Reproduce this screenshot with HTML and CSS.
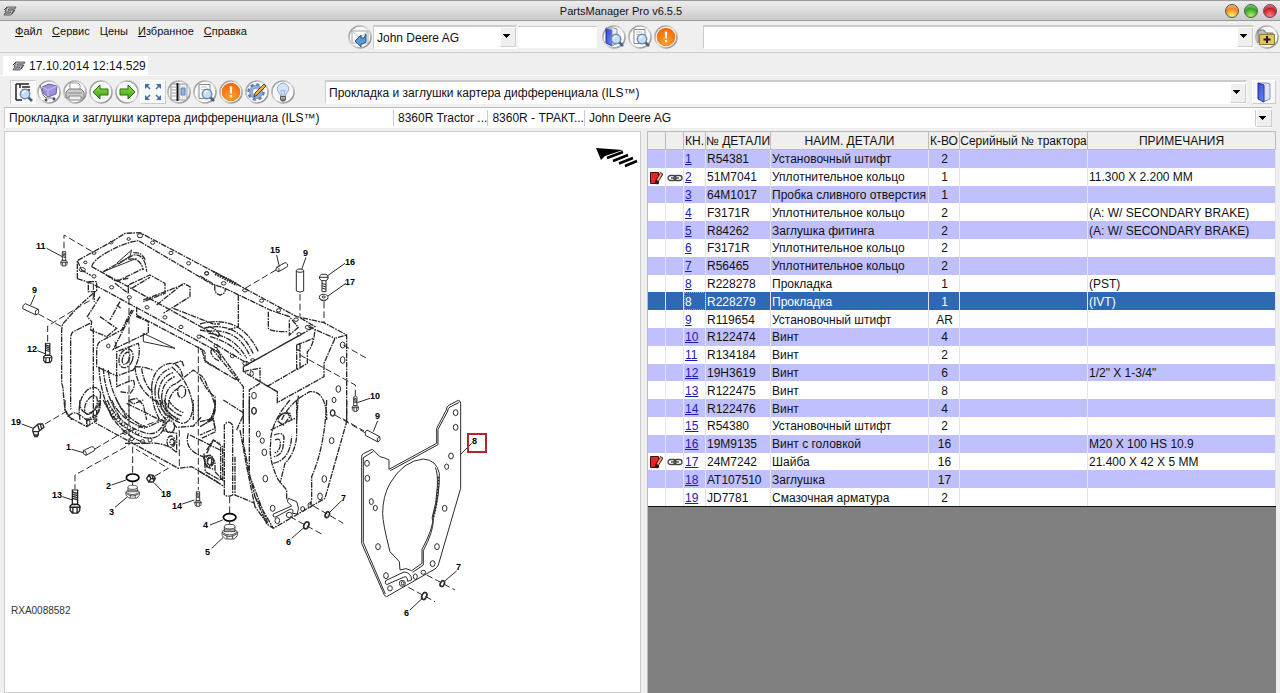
FILE: index.html
```html
<!DOCTYPE html>
<html lang="ru">
<head>
    <meta charset="UTF-8">
    <meta name="viewport" content="width=device-width, initial-scale=1.0">
    <title>PartsManager Pro v6.5.5</title>
    <link rel="stylesheet" href="styles.css">
</head>
<body>
    <!-- shared icons -->
    <svg class="defs" width="0" height="0" aria-hidden="true">
        <defs>
            <linearGradient id="steel" x1="0" y1="0" x2="1" y2="1">
                <stop offset="0" stop-color="#888"/><stop offset=".5" stop-color="#ddd"/><stop offset="1" stop-color="#777"/>
            </linearGradient>
            <radialGradient id="orange" cx=".5" cy=".75" r=".7">
                <stop offset="0" stop-color="#ffa02e"/><stop offset="1" stop-color="#ee6a0a"/>
            </radialGradient>
            <linearGradient id="green" x1="0" y1="0" x2="0" y2="1">
                <stop offset="0" stop-color="#8ee04a"/><stop offset="1" stop-color="#3f9e12"/>
            </linearGradient>
            <linearGradient id="blue" x1="0" y1="0" x2="1" y2="1">
                <stop offset="0" stop-color="#2f45d8"/><stop offset="1" stop-color="#6d8cf5"/>
            </linearGradient>
            <symbol id="ring" viewBox="0 0 24 24">
                <circle cx="12" cy="12" r="11" fill="#f6f6f6" stroke="url(#steel)" stroke-width="1.600"/>
                <circle cx="12" cy="12" r="9.500" fill="none" stroke="#fff"/>
            </symbol>
            <symbol id="lens" viewBox="0 0 24 24">
                <path d="M17 17l4 4" stroke="#4b5f80" stroke-width="2.500"/>
                <circle cx="14" cy="14" r="4.700" fill="#c4def7" stroke="#6d87b0" stroke-width="1.400"/>
                <path d="M11.500 13.500q1-2.500 3-2.300" fill="none" stroke="#fff" stroke-width="1.300"/>
            </symbol>
            <symbol id="logo" viewBox="0 0 14 10">
                <path d="M4 1h9l-1 2H6l-1 1h6l-3 5H1l1-2h5l1-1H2z" fill="#bbb" stroke="#444" stroke-width=".8"/>
                <path d="M1 4l3-3M9 8l3-4" stroke="#444"/>
            </symbol>
            <symbol id="page-find" viewBox="0 0 24 24">
                <use href="#ring"/>
                <path d="M6 4.500h11v14H6z" fill="#fff" stroke="#888"/>
                <path d="M8 7h6M8 9.500h5" stroke="#bbb"/>
                <use href="#lens"/>
            </symbol>
            <symbol id="alert" viewBox="0 0 24 24">
                <use href="#ring"/>
                <circle cx="12" cy="12" r="9.300" fill="url(#orange)"/>
                <path d="M10.700 6.500h2.600l-.5 7h-1.600zM10.900 15h2.200v2.300h-2.200z" fill="#fff"/>
            </symbol>
            <symbol id="arrow" viewBox="0 0 24 24">
                <use href="#ring"/>
                <path d="M4 12l7-7v4h8v6h-8v4z" fill="url(#green)" stroke="#2c6e10" stroke-linejoin="round"/>
            </symbol>
            <symbol id="note" viewBox="0 0 14 14">
                <path d="M1.500 1.500h8v11h-8z" fill="#e8222a" stroke="#3c1212"/>
                <path d="M13 2L8 10l-1 3" fill="none" stroke="#3c1212" stroke-width="3.500"/>
                <path d="M12.500 2.500L8.500 9.500" stroke="#e6b07c" stroke-width="1.800"/>
            </symbol>
            <symbol id="chain" viewBox="0 0 16 8">
                <rect x="1" y="1.500" width="8" height="5" rx="2.500" fill="none" stroke="#444" stroke-width="1.300"/>
                <rect x="7" y="1.500" width="8" height="5" rx="2.500" fill="none" stroke="#444" stroke-width="1.300"/>
                <path d="M4 4h8" stroke="#444" stroke-width="1.300"/>
            </symbol>
            <symbol id="bolt" viewBox="0 0 24 48">
                <path d="M7 1h10v28H7zM3 31l4-3h10l4 3v9l-4 5H7l-4-5zM1 34h22M8 34v10M16 34v10M7 5l10 3M7 9l10 3M7 13l10 3M7 17l10 3" fill="#fff" stroke="#222" stroke-width="2.500"/>
            </symbol>
            <symbol id="plug" viewBox="0 0 50 50">
                <path d="M9 9v15h32V9M2 24l8-5h30l8 5v12l-9 10H13L2 36z" fill="#fff" stroke="#222" stroke-width="2.500"/>
                <ellipse cx="25" cy="9" rx="16" ry="7" fill="#fff" stroke="#222" stroke-width="2.500"/>
                <path d="M2 26q23 16 46 0M4 31q21 15 42 0M17 36v9M34 36v9" fill="none" stroke="#222" stroke-width="2.500"/>
            </symbol>
        </defs>
    </svg>

    <header class="titlebar">
        <svg class="logo" viewBox="0 0 14 10"><use href="#logo"/></svg>
        <h1>PartsManager Pro v6.5.5</h1>
        <div class="window-buttons">
            <button class="orb orb-yellow" aria-label="Свернуть"></button>
            <button class="orb orb-green" aria-label="Развернуть"></button>
            <button class="orb orb-red" aria-label="Закрыть"></button>
        </div>
    </header>

    <div class="menubar">
        <nav class="menu">
            <a href="#"><u>Ф</u>айл</a>
            <a href="#"><u>С</u>ервис</a>
            <a href="#">Цены</a>
            <a href="#"><u>И</u>збранное</a>
            <a href="#"><u>С</u>правка</a>
        </nav>
        <div class="search">
            <button class="tool" aria-label="Открыть">
                <svg viewBox="0 0 24 24"><use href="#ring"/><path d="M4 6h16v12H4z" fill="#fafafa" stroke="#aaa"/><path d="M4 6l8 7 8-7" fill="none" stroke="#bbb"/><path d="M7 16l6-6v3h3l2-4v8l-3 2h-2v3z" fill="#5f97cf" stroke="#27558d"/></svg>
            </button>
            <div class="combo combo-brand">
                <select aria-label="Каталог"><option>John Deere AG</option></select>
            </div>
            <input class="search-text" type="text" aria-label="Поиск">
            <button class="tool" aria-label="Поиск в каталоге">
                <svg viewBox="0 0 24 24"><use href="#ring"/><path d="M4 3l6 2v16l-6-3z" fill="url(#blue)" stroke="#24309a"/><path d="M4 3h8l3 1v14l-5 3V5z" fill="#eee" stroke="#8893b5"/><use href="#lens"/></svg>
            </button>
            <button class="tool" aria-label="Поиск на странице"><svg viewBox="0 0 24 24"><use href="#page-find"/></svg></button>
            <button class="tool" aria-label="Внимание"><svg viewBox="0 0 24 24"><use href="#alert"/></svg></button>
        </div>
        <div class="combo combo-favorites">
            <select aria-label="Избранное"><option></option></select>
        </div>
        <button class="tool" aria-label="Добавить в избранное">
            <svg viewBox="0 0 24 24"><use href="#ring"/><path d="M3 18V5h6l2 3h7v3" fill="#bbb" stroke="#777"/><path d="M4.500 9.500h15v10h-15z" fill="#dcc666" stroke="#927b25"/><path d="M12 11v7M8.500 14.500h7" stroke="#301515" stroke-width="2"/></svg>
        </button>
    </div>

    <div class="tabs">
        <a class="tab" href="#"><svg class="logo" viewBox="0 0 14 10"><use href="#logo"/></svg>17.10.2014 12:14.529</a>
    </div>

    <div class="toolbar">
        <div class="tools">
            <button class="tool tool-flat" aria-label="Просмотр">
                <svg viewBox="0 0 24 24"><path d="M5 20V4M5 4h12M9 4v4M11 7h8M11 10h8M9 4h9M5 20h6" fill="none" stroke="#222" stroke-width="1.500"/><use href="#lens"/></svg>
            </button>
            <button class="tool" aria-label="Корзина">
                <svg viewBox="0 0 24 24"><use href="#ring"/><path d="M5 7l7-3 8 2-1 8-8 3-5-4z" fill="#9a92dc" stroke="#6961a8"/><path d="M5 7l6 3 9-4M11 10v6" fill="none" stroke="#c9c4f2"/><path d="M3 5l3 10 3 3h9" fill="none" stroke="#777"/><circle cx="9" cy="20" r="1.500" fill="#555"/><circle cx="17" cy="19" r="1.500" fill="#555"/></svg>
            </button>
            <button class="tool" aria-label="Печать">
                <svg viewBox="0 0 24 24"><use href="#ring"/><path d="M7 3h8l2 2v6H7z" fill="#fff" stroke="#999"/><path d="M3 12l3-3h12l3 3v6H3z" fill="#ccc" stroke="#777"/><path d="M5 13h14M6 16h12v4H6z" fill="#eee" stroke="#888"/></svg>
            </button>
            <button class="tool" aria-label="Назад"><svg viewBox="0 0 24 24"><use href="#arrow"/></svg></button>
            <button class="tool" aria-label="Вперёд"><svg class="flip" viewBox="0 0 24 24"><use href="#arrow"/></svg></button>
            <button class="tool tool-raised" aria-label="На весь экран">
                <svg viewBox="0 0 24 24"><path d="M4 9V4h5zM15 4h5v5zM4 15v5h5zM20 15v5h-5z" fill="#3f6fa3"/><path d="M5 5l4 4M19 5l-4 4M5 19l4-4M19 19l-4-4" stroke="#3f6fa3" stroke-width="1.500"/></svg>
            </button>
            <button class="tool" aria-label="Панели">
                <svg viewBox="0 0 24 24"><use href="#ring"/><path d="M4 4h7v16H4z" fill="#fff" stroke="#888"/><path d="M5 7h4M5 10h4M5 13h4M5 16h4" stroke="#999"/><path d="M10.500 3v18" stroke="#111" stroke-width="2"/><path d="M12 4h8v16h-8z" fill="#e6ecf3" stroke="#999"/><path d="M14 8h4v7h-4z" fill="#8fb3d9" stroke="#5b84b0"/></svg>
            </button>
            <button class="tool" aria-label="Найти"><svg viewBox="0 0 24 24"><use href="#page-find"/></svg></button>
            <button class="tool" aria-label="Сообщения"><svg viewBox="0 0 24 24"><use href="#alert"/></svg></button>
            <button class="tool" aria-label="Настройки">
                <svg viewBox="0 0 24 24"><use href="#ring"/><circle cx="11" cy="12" r="7" fill="#7999c9" stroke="#5a7fb8" stroke-width="3.500" stroke-dasharray="3 2.500"/><circle cx="11" cy="12" r="6.500" fill="#8eabd6"/><circle cx="11" cy="12" r="3" fill="#fff"/><path d="M9 17l1-4 9-9 2 2-9 9z" fill="#eeb13d" stroke="#5c4015"/></svg>
            </button>
            <button class="tool" aria-label="Подсказка">
                <svg viewBox="0 0 24 24"><use href="#ring"/><path d="M9.500 16q0-2-2-4a5.500 5.500 0 1 1 9 0q-2 2-2 4z" fill="#d3e6fb" stroke="#8aa8cf"/><path d="M11 15l-1-5 2 1 2-1-1 5" fill="none" stroke="#9bb4d4"/><path d="M9.500 16.500h5v3l-1 1.500h-3l-1-1.500z" fill="#777" stroke="#555"/><path d="M10 18h4" stroke="#ddc"/></svg>
            </button>
        </div>
        <div class="combo combo-section">
            <select aria-label="Раздел"><option>Прокладка и заглушки картера дифференциала (ILS™)</option></select>
        </div>
        <button class="tool tool-raised tool-book" aria-label="Книга">
            <svg viewBox="0 0 24 24"><path d="M6 3h9l3 1v15l-7 3z" fill="#dfe3ef" stroke="#8893b5"/><path d="M6 3l6 2v17l-6-3z" fill="url(#blue)" stroke="#24309a"/></svg>
        </button>
    </div>

    <div class="pathbar">
        <span>Прокладка и заглушки картера дифференциала (ILS™)</span>
        <span>8360R Tractor ...</span>
        <span>8360R - ТРАКТ...</span>
        <span>John Deere AG</span>
        <button class="drop" aria-label="Показать список"></button>
    </div>

    <main class="work">
        <section class="drawing">
            <svg viewBox="5 132 635 560" preserveAspectRatio="xMinYMin meet" role="img" aria-label="RXA0088582">
                <path d="M596 148l27 2-9 3-9 3-4 4z"/>
                <path d="M607 158l16-6M613 161l15-6M619 163.500l14-5.500M625 166l12-5" stroke="#000" stroke-width="2.500"/>

                <!-- housing, upper left -->
                <g class="ink" transform="translate(0 220) scale(.3333)">
                    <g class="phantom">
                        <path d="M232 176V122L275 98L334 66L375 40L420 38L660 165M275 140Q280 120 320 98Q370 68 415 62L640 195M232 122L245 150L272 166M232 176L275 190L655 396M275 140L660 352"/>
                        <path d="M280 220L235 260L190 310Q185 318 185 335V490Q190 500 190 520L195 570L215 600M270 310L220 335Q212 340 212 355V560M280 325V600"/>
                        <path d="M265 185H290V215H265ZM283 215V245M300 230L262 290L275 305L272 330L320 350L350 325L300 290M360 245L330 300M350 255L362 265"/>
                        <path d="M310 155L400 105Q435 100 440 155M318 165L345 182L385 175M350 185L430 145M385 118Q420 110 430 150M400 98Q425 95 436 120M345 190L385 220"/>
                        <path d="M385 220V195L450 165L495 190V220L430 245M395 205L450 172M470 255L550 190L570 200V230L490 280M430 240L548 195M520 265L640 312H660M625 320Q650 325 660 345"/>
                        <path d="M410 260V290L445 305V338L340 388L400 270M395 270L365 330L300 365Q290 370 290 400V440L350 468V395L415 370Q425 410 400 450L350 468M410 285L590 380Q612 388 612 420L660 450"/>
                        <path d="M297 440Q300 520 340 600M310 445Q315 530 365 600M325 450Q330 520 385 600M350 470V500Q370 490 400 480Q410 500 390 520L360 515M390 540L410 535L430 555L440 600M380 550L480 600"/>
                        <path d="M405 440Q440 440 460 452M405 440Q410 510 470 545M425 445Q430 490 460 520M455 500Q460 440 510 430Q540 430 548 470M520 432L545 422L552 440M530 490L580 450L600 465Q612 470 622 500Q640 530 645 560L632 600"/>
                        <path d="M465 510Q470 460 512 445M475 520Q480 470 520 458M485 535Q485 485 525 470M495 550Q495 500 530 490M505 565Q505 520 535 505M515 440Q585 500 580 600M465 510Q465 570 500 600M475 520Q480 570 510 600M485 535Q492 575 522 600M495 550Q500 580 535 600M455 500Q455 560 480 600"/>
                        <path d="M240 600Q230 540 262 510Q290 490 302 520M302 520L298 560Q290 600 260 600"/>
                        <ellipse cx="378" cy="415" rx="20" ry="29" transform="rotate(20 378 415)"/><ellipse cx="378" cy="415" rx="10" ry="19" transform="rotate(20 378 415)"/>
                        <ellipse cx="273" cy="555" rx="16" ry="30" transform="rotate(25 273 555)"/><ellipse cx="545" cy="515" rx="12" ry="18"/>
                        <ellipse cx="648" cy="405" rx="10" ry="20" transform="rotate(-40 648 405)"/>
                    </g>
                    <path d="M350 130L395 90L390 108L355 133M430 340L525 385L430 365ZM345 365L350 385M410 115L310 155"/>
                    <g class="holes"><ellipse cx="420" cy="47" rx="8" ry="6"/><ellipse cx="458" cy="68" rx="6" ry="5"/><ellipse cx="513" cy="99" rx="6" ry="5"/><ellipse cx="566" cy="130" rx="6" ry="5"/><ellipse cx="620" cy="160" rx="6" ry="5"/><ellipse cx="386" cy="57" rx="5" ry="4"/><ellipse cx="334" cy="68" rx="5" ry="4"/><ellipse cx="282" cy="99" rx="6" ry="4"/><ellipse cx="256" cy="127" rx="5" ry="4"/><ellipse cx="247" cy="149" rx="9" ry="6"/><ellipse cx="282" cy="169" rx="6" ry="5"/><ellipse cx="335" cy="202" rx="6" ry="5"/><ellipse cx="388" cy="232" rx="6" ry="5"/><ellipse cx="441" cy="262" rx="6" ry="5"/><ellipse cx="495" cy="292" rx="6" ry="5"/><ellipse cx="543" cy="321" rx="6" ry="5"/><ellipse cx="597" cy="350" rx="6" ry="5"/><ellipse cx="325" cy="378" rx="5" ry="6"/></g>
                    <path class="axis" d="M192 85V45L282 98M115 282L185 320M143 365V318L280 235V195M387 235V600M595 380V600"/>
                    <path d="M140 85L187 110M105 225L92 255M112 392L138 402"/>
                    <path d="M76 251L115 268Q120 280 108 285L68 266Q66 255 76 251M115 268Q102 270 108 285"/>
                    <use href="#bolt" x="180" y="93" width="24" height="48"/>
                    <use href="#bolt" x="127" y="368" width="32" height="64"/>
                </g>

                <!-- housing, upper right -->
                <g class="ink" transform="translate(200 220) scale(.3333)">
                    <g class="phantom">
                        <path d="M60 165L290 290L372 308L440 345V600M0 168L45 195L75 205L210 270L268 290L295 322L268 345V297M115 225V320L85 330M205 275V325Q210 335 265 335"/>
                        <path d="M130 440L345 320L298 292M130 455L160 448L180 445V485L232 515V548L372 470V430L405 355L440 345M325 320L405 355M0 345L145 432L295 348M130 440V455L230 515M200 500L295 445"/>
                        <path d="M290 375V450L322 430V395Q340 380 345 330M290 375L340 355M300 370V440M290 390H300"/>
                        <path d="M0 312Q120 280 175 395M10 325Q115 300 160 402M20 335Q110 320 150 408M25 340Q100 345 140 415M30 350Q90 365 125 408M0 330L25 335"/>
                        <path d="M35 385L130 500V600M50 385L118 480M0 385L15 395V425L110 480M0 470Q20 515 45 530V570Q42 600 20 600M148 600V510L180 490M245 600Q270 545 330 515Q372 512 380 580V600M290 600L295 525M235 595L245 580H270L275 600"/>
                        <path d="M45 195Q40 220 60 225Q80 220 75 205"/>
                    </g>
                    <path d="M40 155L112 192M45 162L110 196" stroke-width="6" stroke-dasharray="5 3"/>
                    <g class="holes"><ellipse cx="20" cy="160" rx="6" ry="5"/><ellipse cx="71" cy="190" rx="7" ry="5"/><ellipse cx="135" cy="211" rx="7" ry="5"/><ellipse cx="185" cy="242" rx="6" ry="5"/><ellipse cx="236" cy="271" rx="6" ry="5"/><ellipse cx="288" cy="299" rx="7" ry="5"/><ellipse cx="325" cy="322" rx="9" ry="6"/><ellipse cx="297" cy="343" rx="6" ry="5"/><ellipse cx="97" cy="408" rx="6" ry="5"/><ellipse cx="137" cy="430" rx="9" ry="6"/><ellipse cx="158" cy="420" rx="6" ry="4"/><ellipse cx="48" cy="378" rx="6" ry="5"/><ellipse cx="155" cy="461" rx="5" ry="8"/><ellipse cx="428" cy="375" rx="7" ry="9"/><ellipse cx="428" cy="420" rx="7" ry="10"/><ellipse cx="415" cy="507" rx="7" ry="10"/><ellipse cx="402" cy="540" rx="6" ry="8"/><ellipse cx="398" cy="580" rx="7" ry="9"/><ellipse cx="162" cy="527" rx="7" ry="10"/><ellipse cx="162" cy="573" rx="7" ry="10"/></g>
                    <path class="axis" d="M228 150L135 205M300 222V290M372 245V308M300 405L466 495V528M430 375L500 415"/>
                    <path d="M230 105L238 140M318 112L305 148M435 130L382 168M438 190L384 228M510 535L472 548"/>
                    <path d="M230 142L255 128Q266 130 262 140L236 155Q224 152 230 142M230 142Q240 143 236 155M289 152V213Q300 220 311 213V152"/>
                    <ellipse cx="300" cy="152" rx="11" ry="5"/>
                    <path d="M359 168L365 163H378L384 168V177L378 182H365L359 177ZM359 172H384M366 182V215H378V182M366 190L378 194M366 197L378 201M366 204L378 208"/>
                    <ellipse cx="371" cy="232" rx="13" ry="9"/><ellipse cx="371" cy="231" rx="5" ry="3"/><path d="M358 234Q371 252 384 234"/>
                    <use href="#bolt" x="454" y="529" width="24" height="48"/>
                </g>

                <!-- housing, lower left -->
                <g class="ink" transform="translate(0 400) scale(.3333)">
                    <g class="phantom">
                        <path d="M195 0V30L205 50L260 80L290 62V30M260 55V80M205 50Q220 30 240 45L260 60L285 45M285 50V68L535 205L575 200L660 250M300 0Q305 25 290 45M240 0Q235 30 262 42Q300 30 295 0"/>
                        <path d="M310 0Q345 80 430 112Q480 125 495 75V50M322 0Q350 70 432 98Q475 110 490 70M335 0Q360 60 435 85M350 0Q380 60 440 82L490 60M385 0L400 12L430 0M330 40Q370 110 440 130Q500 125 530 158V100L490 92V60M375 130L440 130"/>
                        <path d="M470 0Q490 50 545 70Q580 70 580 0M480 0Q500 45 540 58M492 0Q510 35 545 48M505 0Q520 25 550 38M520 70L530 82L580 78L605 50M565 100Q550 150 610 170M570 105L660 150M600 80L640 58L647 95L605 115M620 150L640 120L660 130M612 160L616 215L660 240M645 0Q650 50 610 75"/>
                        <ellipse cx="513" cy="125" rx="12" ry="17"/><ellipse cx="516" cy="126" rx="6" ry="9"/><ellipse cx="510" cy="80" rx="14" ry="18"/><ellipse cx="628" cy="183" rx="13" ry="17"/><ellipse cx="630" cy="185" rx="7" ry="11"/>
                        <path d="M317 5Q350 75 425 105" stroke-width="7" stroke-dasharray="3 7"/>
                    </g>
                    <g class="holes"><ellipse cx="265" cy="68" rx="5" ry="8"/><ellipse cx="428" cy="125" rx="6" ry="6"/><ellipse cx="450" cy="120" rx="6" ry="6"/><ellipse cx="375" cy="97" rx="6" ry="6"/><ellipse cx="395" cy="117" rx="6" ry="5"/></g>
                    <path class="axis" d="M135 72L215 25M285 147L355 105L495 55M387 0V135L225 225V268M398 140V222M465 228L505 205L408 148M595 0V270M538 90V205"/>
                    <path d="M65 72L100 85M215 148L250 158M187 290L218 300M335 255L378 240M345 322L383 290M485 272L462 248M547 312L583 300M398 247V256"/>
                    <path d="M250 152L275 140Q287 142 283 152L258 166Q245 162 250 152M250 152Q262 154 258 166"/>
                    <path d="M100 85L115 72L128 72L132 82L115 95V105H102L98 92ZM112 72L118 90M120 70L125 86M100 95H115M104 105V110H112V105" stroke-width="4"/>
                    <ellipse cx="398" cy="233" rx="19" ry="11" stroke="#000" stroke-width="5"/>
                    <use href="#plug" x="375" y="254" width="46" height="44"/>
                    <path d="M440 235L447 224L460 226L466 235L460 246H446ZM447 224L453 236L446 246M453 236L466 235M456 226L462 245" stroke-width="4"/>
                    <use href="#bolt" x="206" y="268" width="38" height="76"/>
                    <use href="#bolt" x="582" y="273" width="24" height="50"/>
                </g>

                <!-- housing, lower right -->
                <g class="ink" transform="translate(200 400) scale(.3333)">
                    <g class="phantom">
                        <path d="M130 0V130L150 230L205 375L220 385L375 295L440 65V0M148 0V220L165 290L220 385M165 290L200 372M120 90L140 200L165 320L205 375M110 90L130 45"/>
                        <path d="M73 285V75Q85 58 98 75V285Q85 292 73 285M105 170V285L165 310M62 140V240M70 0L130 38M0 65L40 55L45 85L0 105M20 160L40 120L68 140V240L45 215M10 170L30 165L45 185V210L20 200ZM0 215L73 260"/>
                        <path d="M270 0Q210 70 212 130Q205 180 235 240L260 270V300M290 0V110Q285 160 255 190L240 250M380 0Q375 140 335 230V300L330 315M212 90L285 55M235 50L260 35L270 50L250 75L235 65ZM222 105Q260 90 250 130Q250 165 222 170M225 120Q245 110 240 140Q235 158 224 158M220 190Q270 180 275 110"/>
                        <path d="M45 0Q48 40 35 55"/>
                    </g>
                    <path d="M220 342L275 318L262 305L265 295L290 305Q300 325 292 342L278 340Q282 325 270 328L225 352Q216 350 220 342"/>
                    <g class="holes"><ellipse cx="162" cy="32" rx="7" ry="10"/><ellipse cx="175" cy="102" rx="6" ry="9"/><ellipse cx="187" cy="122" rx="6" ry="8"/><ellipse cx="193" cy="157" rx="7" ry="10"/><ellipse cx="196" cy="236" rx="7" ry="10"/><ellipse cx="218" cy="325" rx="7" ry="9"/><ellipse cx="232" cy="362" rx="7" ry="9"/><ellipse cx="268" cy="345" rx="9" ry="8"/><ellipse cx="308" cy="327" rx="6" ry="7"/><ellipse cx="330" cy="315" rx="6" ry="7"/><ellipse cx="398" cy="38" rx="7" ry="9"/><ellipse cx="395" cy="122" rx="7" ry="9"/><ellipse cx="373" cy="237" rx="7" ry="10"/><ellipse cx="360" cy="289" rx="7" ry="10"/><ellipse cx="28" cy="183" rx="7" ry="12"/></g>
                    <path class="axis" d="M405 45L495 98M340 318L430 370M270 350L365 402M89 290V340"/>
                    <path d="M425 302L388 338M275 415L313 382M30 375L68 360M35 445L70 412M89 364V376"/>
                    <ellipse cx="382" cy="344" rx="6" ry="9" stroke-width="5" transform="rotate(25 382 344)"/>
                    <ellipse cx="319" cy="376" rx="7" ry="11" stroke-width="5" transform="rotate(25 319 376)"/>
                    <ellipse cx="89" cy="352" rx="19" ry="11" stroke="#000" stroke-width="5"/>
                    <use href="#plug" x="64" y="370" width="50" height="52"/>
                </g>

                <!-- gasket -->
                <g class="ink" transform="translate(340 390) scale(.3333)">
                    <path d="M65 200Q64 194 70 191L97 178L120 200Q135 203 147 210V238L290 160V115L318 62Q320 48 328 45L355 31Q362 32 362 40V295L295 525Q292 532 285 537L140 620Q135 620 132 613L65 460Z"/>
                    <path d="M70 203L100 184M70 203V458L136 612M151 242L294 164V118L322 66Q324 54 330 51L358 37"/>
                    <path d="M180 540L178 515L150 485Q128 400 128 370Q128 320 150 280Q190 212 250 207Q290 210 298 250Q300 310 280 380Q278 420 246 478V520L215 542L198 536Z"/>
                    <path d="M286 232Q294 250 292 290Q290 340 276 385M280 390Q280 425 250 482V525L218 547"/>
                    <path d="M295 260Q296 330 278 390" stroke-width="6" stroke-dasharray="5 4"/>
                    <path d="M137 572L192 546Q214 548 215 570L203 574Q202 555 190 562L140 584Q133 580 137 572"/>
                    <g class="holes"><ellipse cx="347" cy="68" rx="7" ry="9"/><ellipse cx="347" cy="112" rx="7" ry="9"/><ellipse cx="333" cy="198" rx="7" ry="9"/><ellipse cx="320" cy="230" rx="6" ry="8"/><ellipse cx="314" cy="355" rx="7" ry="9"/><ellipse cx="291" cy="470" rx="7" ry="9"/><ellipse cx="278" cy="521" rx="7" ry="9"/><ellipse cx="81" cy="220" rx="7" ry="9"/><ellipse cx="82" cy="265" rx="7" ry="9"/><ellipse cx="94" cy="335" rx="6" ry="9"/><ellipse cx="106" cy="354" rx="6" ry="8"/><ellipse cx="114" cy="470" rx="7" ry="9"/><ellipse cx="138" cy="557" rx="7" ry="9"/><ellipse cx="150" cy="595" rx="7" ry="8"/><ellipse cx="187" cy="580" rx="9" ry="9"/><ellipse cx="188" cy="580" rx="4" ry="5"/><ellipse cx="226" cy="560" rx="6" ry="8"/><ellipse cx="250" cy="547" rx="7" ry="6"/></g>
                    <path class="axis" d="M8 86L72 123M260 555L345 600M205 592L285 635"/>
                    <path d="M113 92L100 125M350 543L312 575M210 660L247 625M362 193L395 160"/>
                    <path d="M81 120L119 140Q124 150 114 156L76 136Q73 124 81 120M119 140Q108 144 114 156" fill="#fff"/>
                    <ellipse cx="307" cy="581" rx="6" ry="9" stroke-width="5" transform="rotate(25 307 581)"/>
                    <ellipse cx="253" cy="618" rx="7" ry="11" stroke-width="5" transform="rotate(25 253 618)"/>
                </g>
                <rect class="mark" x="468" y="434" width="18" height="18"/>

                <g class="callouts">
                    <text x="36" y="249">11</text><text x="32" y="293">9</text><text x="27" y="352">12</text>
                    <text x="11" y="425">19</text><text x="66" y="450">1</text><text x="52" y="498">13</text>
                    <text x="106" y="489">2</text><text x="109" y="515">3</text><text x="161" y="497">18</text>
                    <text x="172" y="509">14</text><text x="203" y="528">4</text><text x="205" y="555">5</text>
                    <text x="270" y="253">15</text><text x="303" y="256">9</text><text x="345" y="265">16</text>
                    <text x="345" y="285">17</text><text x="370" y="399">10</text><text x="375" y="419">9</text>
                    <text x="472" y="444">8</text><text x="341" y="501">7</text><text x="286" y="545">6</text>
                    <text x="456" y="570">7</text><text x="404" y="616">6</text>
                </g>
                <text class="drawing-id" x="11" y="614">RXA0088582</text>
            </svg>
        </section>

        <section class="parts">
            <table>
                <colgroup>
                    <col class="col-icon"><col class="col-icon"><col class="col-key"><col class="col-number">
                    <col class="col-name"><col class="col-qty"><col class="col-serial"><col>
                </colgroup>
                <thead>
                    <tr><th></th><th></th><th>КН.</th><th>№ ДЕТАЛИ</th><th>НАИМ. ДЕТАЛИ</th><th>К-ВО</th><th>Серийный № трактора</th><th>ПРИМЕЧАНИЯ</th></tr>
                </thead>
                <tbody>
                    <tr><td></td><td></td><td><a href="#">1</a></td><td>R54381</td><td>Установочный штифт</td><td>2</td><td></td><td></td></tr>
                    <tr><td><svg class="note" viewBox="0 0 14 14"><use href="#note"/></svg></td><td><svg class="chain" viewBox="0 0 16 8"><use href="#chain"/></svg></td><td><a href="#">2</a></td><td>51M7041</td><td>Уплотнительное кольцо</td><td>1</td><td></td><td>11.300 X 2.200 MM</td></tr>
                    <tr><td></td><td></td><td><a href="#">3</a></td><td>64M1017</td><td>Пробка сливного отверстия</td><td>1</td><td></td><td></td></tr>
                    <tr><td></td><td></td><td><a href="#">4</a></td><td>F3171R</td><td>Уплотнительное кольцо</td><td>2</td><td></td><td>(A: W/ SECONDARY BRAKE)</td></tr>
                    <tr><td></td><td></td><td><a href="#">5</a></td><td>R84262</td><td>Заглушка фитинга</td><td>2</td><td></td><td>(A: W/ SECONDARY BRAKE)</td></tr>
                    <tr><td></td><td></td><td><a href="#">6</a></td><td>F3171R</td><td>Уплотнительное кольцо</td><td>2</td><td></td><td></td></tr>
                    <tr><td></td><td></td><td><a href="#">7</a></td><td>R56465</td><td>Уплотнительное кольцо</td><td>2</td><td></td><td></td></tr>
                    <tr><td></td><td></td><td><a href="#">8</a></td><td>R228278</td><td>Прокладка</td><td>1</td><td></td><td>(PST)</td></tr>
                    <tr class="selected"><td></td><td></td><td><a href="#">8</a></td><td>R228279</td><td>Прокладка</td><td>1</td><td></td><td>(IVT)</td></tr>
                    <tr><td></td><td></td><td><a href="#">9</a></td><td>R119654</td><td>Установочный штифт</td><td>AR</td><td></td><td></td></tr>
                    <tr><td></td><td></td><td><a href="#">10</a></td><td>R122474</td><td>Винт</td><td>4</td><td></td><td></td></tr>
                    <tr><td></td><td></td><td><a href="#">11</a></td><td>R134184</td><td>Винт</td><td>2</td><td></td><td></td></tr>
                    <tr><td></td><td></td><td><a href="#">12</a></td><td>19H3619</td><td>Винт</td><td>6</td><td></td><td>1/2" X 1-3/4"</td></tr>
                    <tr><td></td><td></td><td><a href="#">13</a></td><td>R122475</td><td>Винт</td><td>8</td><td></td><td></td></tr>
                    <tr><td></td><td></td><td><a href="#">14</a></td><td>R122476</td><td>Винт</td><td>4</td><td></td><td></td></tr>
                    <tr><td></td><td></td><td><a href="#">15</a></td><td>R54380</td><td>Установочный штифт</td><td>2</td><td></td><td></td></tr>
                    <tr><td></td><td></td><td><a href="#">16</a></td><td>19M9135</td><td>Винт с головкой</td><td>16</td><td></td><td>M20 X 100 HS 10.9</td></tr>
                    <tr><td><svg class="note" viewBox="0 0 14 14"><use href="#note"/></svg></td><td><svg class="chain" viewBox="0 0 16 8"><use href="#chain"/></svg></td><td><a href="#">17</a></td><td>24M7242</td><td>Шайба</td><td>16</td><td></td><td>21.400 X 42 X 5 MM</td></tr>
                    <tr><td></td><td></td><td><a href="#">18</a></td><td>AT107510</td><td>Заглушка</td><td>17</td><td></td><td></td></tr>
                    <tr><td></td><td></td><td><a href="#">19</a></td><td>JD7781</td><td>Смазочная арматура</td><td>2</td><td></td><td></td></tr>
                </tbody>
            </table>
        </section>
    </main>
</body>
</html>
```

FILE: styles.css
```css
* {
    box-sizing: border-box;
}
body {
    margin: 0;
    min-height: 100vh;
    display: flex;
    flex-direction: column;
    background: #efefef;
    color: #111;
    font: 12px/16px "Liberation Sans", Arial, sans-serif;
}
button, input, select {
    font: inherit;
    color: inherit;
    margin: 0;
}
a {
    color: inherit;
    text-decoration: none;
}
.defs {
    position: absolute;
}
.logo {
    width: 14px;
    height: 10px;
}

/* title bar */
.titlebar {
    height: 21px;
    display: flex;
    align-items: center;
    padding: 0 3px;
    border-top: 1px solid #999;
    border-bottom: 1px solid #999;
    background: linear-gradient(#ededed, #cacaca);
}
.titlebar h1 {
    flex: 1;
    margin: 0;
    font-size: 11px;
    font-weight: normal;
    text-align: center;
}
.window-buttons {
    display: flex;
    gap: 5px;
}
.orb {
    width: 14px;
    height: 14px;
    padding: 0;
    border: 1px solid #555;
    border-radius: 50%;
}
.orb-yellow {
    background: radial-gradient(circle at 50% 90%, #fff36b, #e98a1c 60%, #f5cf94);
}
.orb-green {
    background: radial-gradient(circle at 50% 90%, #b8f25c, #2fa325 60%, #b5e6ab);
}
.orb-red {
    background: radial-gradient(circle at 50% 90%, #ff7d7d, #c91f2c 60%, #f0a9ab);
}

/* menu and search */
.menubar {
    display: flex;
    align-items: center;
    height: 32px;
    border-bottom: 1px solid #ccc;
}
.menu {
    display: flex;
    flex: 0 0 347px;
    gap: 10px;
    padding: 0 0 11px 15px;
    font-size: 11px;
}
.search {
    display: flex;
    align-items: center;
    flex: 0 0 356px;
}
.tool {
    display: flex;
    align-items: center;
    justify-content: center;
    width: 26px;
    height: 24px;
    padding: 0;
    border: 0;
    background: none;
}
.tool svg {
    flex: none;
    width: 24px;
    height: 24px;
}
.tool-flat, .tool-raised {
    border: 1px solid #ccc;
    background: #f8f8f8;
}
.tool-flat {
    border-right-color: #fff;
    border-bottom-color: #fff;
}
.tool-raised {
    border-top-color: #fff;
    border-left-color: #fff;
}
.flip {
    transform: scaleX(-1);
}
.combo {
    display: grid;
    align-items: center;
    height: 24px;
    border: 1px solid #fff;
    border-top: 2px solid #ccc;
    border-left-color: #ccc;
    background: #fff;
}
.combo select {
    grid-area: 1 / 1;
    width: 100%;
    height: 20px;
    padding: 1px 20px 0 3px;
    border: 0;
    background: none;
    appearance: none;
}
.combo::after, .drop {
    content: "";
    grid-area: 1 / 1;
    justify-self: end;
    width: 14px;
    height: 18px;
    border: 1px solid #fff;
    border-right-color: #ccc;
    border-bottom-color: #ccc;
    background: linear-gradient(#000, #000) 2px 6px / 7px 1px no-repeat,
        linear-gradient(#000, #000) 3px 7px / 5px 1px no-repeat,
        linear-gradient(#000, #000) 4px 8px / 3px 1px no-repeat,
        linear-gradient(#000, #000) 5px 9px / 1px 1px no-repeat, #efefef;
    pointer-events: none;
}
.combo-brand {
    width: 144px;
}
.search-text {
    width: 79px;
    height: 22px;
    margin: 0 4px 0 1px;
    border: 0;
    border-top: 1px solid #ccc;
    background: #fff;
}
.combo-favorites {
    flex: 1;
}

/* tabs and toolbar */
.tabs {
    display: flex;
    height: 23px;
    padding: 3px 3px 0;
    border-bottom: 1px solid #fff;
}
.tab {
    display: flex;
    align-items: center;
    gap: 3px;
    padding: 1px 2px 0 9px;
    background: #fff;
}
.toolbar {
    display: flex;
    align-items: center;
    height: 31px;
    padding: 1px 4px 0 10px;
}
.tools {
    display: flex;
    flex: 0 0 315px;
}
.combo-section {
    flex: 1;
    margin-right: 5px;
}
.tool-book {
    width: 24px;
}
.pathbar {
    display: flex;
    align-items: center;
    height: 21px;
    margin: 0 8px 0 4px;
    border-top: 1px solid #bbb;
    border-left: 1px solid #ccc;
    background: #fff;
}
.pathbar span {
    flex: 0 0 94px;
    padding-left: 4px;
    border-right: 1px solid #ccc;
    white-space: nowrap;
}
.pathbar span:first-child {
    flex-basis: 389px;
}
.pathbar span:nth-child(4) {
    flex: 1;
}
.drop {
    width: 16px;
    padding: 0;
}

/* drawing and parts list */
.work {
    flex: 1;
    display: grid;
    grid-template-columns: 637fr 629fr;
    gap: 6px;
    padding: 3px 4px 1px;
}
.drawing {
    border: 1px solid #ccc;
    background: #fff;
}
.drawing svg {
    display: block;
    width: 100%;
}
.ink {
    fill: none;
    stroke: #2a2a2a;
    stroke-width: 3;
}
.phantom {
    stroke-width: 4;
    stroke-dasharray: 17 3 5 3;
}
.holes {
    stroke-width: 3;
}
.axis {
    stroke-dasharray: 20 9;
}
.mark {
    fill: none;
    stroke: #b3262b;
    stroke-width: 2;
}
.callouts {
    font-size: 9px;
    font-weight: bold;
}
.drawing-id {
    font-size: 10px;
    fill: #333;
}
.parts {
    border-left: 1px solid #bbb;
    background: #808080;
}
table {
    width: 100%;
    height: 376px;
    border-collapse: separate;
    border-spacing: 0;
    border-bottom: 1px solid #111;
    table-layout: fixed;
    background: #fff;
}
.col-icon {
    width: 18px;
}
.col-key {
    width: 22px;
}
.col-number {
    width: 65px;
}
.col-name {
    width: 158px;
}
.col-qty {
    width: 31px;
}
.col-serial {
    width: 128px;
}
th, td {
    padding: 2px 0 0 1px;
    border-right: 1px solid #e4e4ec;
    line-height: 15px;
    text-align: left;
    white-space: nowrap;
}
th {
    height: 19px;
    padding: 2px 0 0;
    border-top: 1px solid #bbb;
    border-right-color: #bbb;
    border-bottom: 1px solid #bbb;
    background: #efefef;
    font-weight: normal;
    text-align: center;
}
td:nth-child(6) {
    text-align: center;
}
td a {
    color: #1c1cb0;
    text-decoration: underline;
}
tbody tr:nth-child(odd) {
    background: #c0c0ff;
}
tbody .selected {
    background: #3068b4 !important;
    color: #fff;
}
.selected a {
    color: #fff;
    text-decoration: none;
}
.selected td:nth-child(3) {
    outline: 1px dotted #b99a6a;
    outline-offset: -1px;
}
.note, .chain {
    display: block;
}
.note {
    width: 14px;
    height: 14px;
}
.chain {
    width: 16px;
    height: 8px;
}
```
